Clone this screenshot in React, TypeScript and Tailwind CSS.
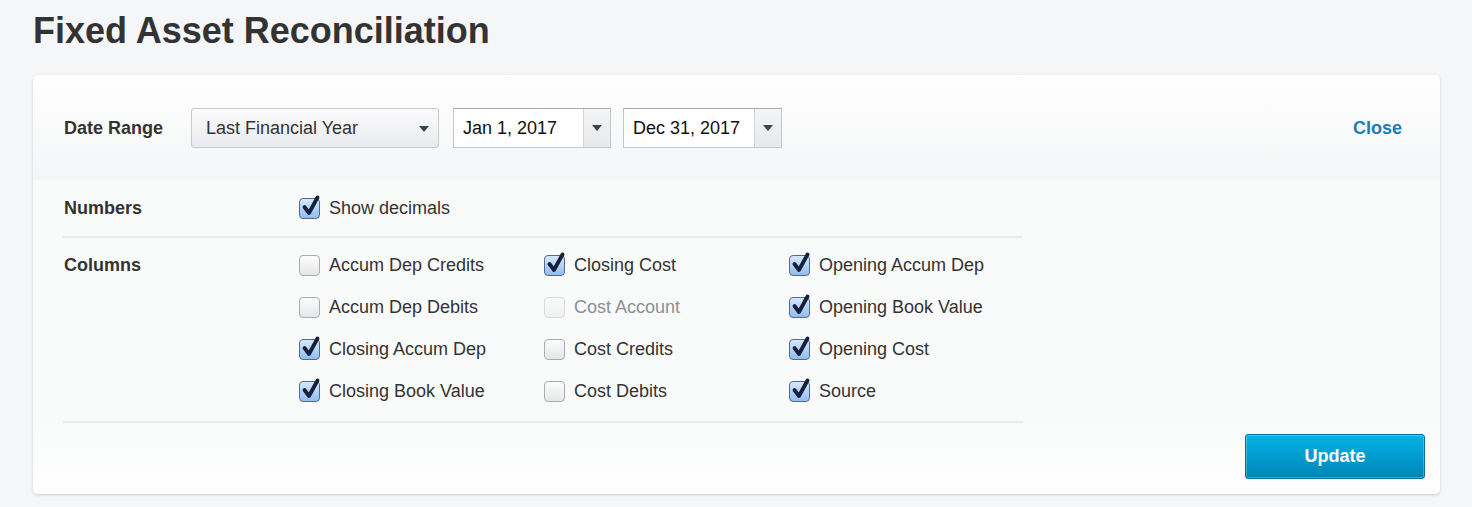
import React, { useState } from 'react';

const font = { fontFamily: '"Liberation Sans", Arial, sans-serif' };

function Arrow() {
  return (
    <svg width="10" height="6" viewBox="0 0 10 6" className="block">
      <path d="M0 0 L10 0 L5 6 Z" fill="#3d434c" />
    </svg>
  );
}

function Checkbox({ checked, disabled }: { checked: boolean; disabled?: boolean }) {
  return (
    <span className="relative inline-block w-[21px] h-[21px] shrink-0">
      <span
        className={
          'absolute inset-0 rounded-[4px] border ' +
          (checked
            ? 'border-[#56698a] bg-gradient-to-b from-[#d6e8ff] to-[#8fbdf0]'
            : disabled
            ? 'border-[#d8dadd] bg-gradient-to-b from-[#fbfbfb] to-[#eeeff0]'
            : 'border-[#a9adb2] bg-gradient-to-b from-[#fdfdfd] to-[#e4e6e8]')
        }
      />
      {checked && (
        <svg width="22" height="24" viewBox="0 0 22 24" className="absolute left-[1px] top-[-4px]">
          <path d="M4.5 13 L9 19 L17.5 3.5" fill="none" stroke="#17203a" strokeWidth="3.8" strokeLinecap="round" strokeLinejoin="round" />
        </svg>
      )}
    </span>
  );
}

function Check({ label, checked, disabled }: { label: string; checked: boolean; disabled?: boolean }) {
  return (
    <label className="flex items-center gap-[9px] h-[42px]">
      <Checkbox checked={checked} disabled={disabled} />
      <span className={'text-[18px] ' + (disabled ? 'text-[#8c8f93]' : 'text-[#333]')}>{label}</span>
    </label>
  );
}

function DateInput({ value, width }: { value: string; width: string }) {
  return (
    <div className={'flex h-[40px] border border-[#c3c6ca] border-t-[#a8abb0] bg-white ' + width}>
      <div className="flex-1 flex items-center px-[9px] pt-[2px] text-[18px] text-[#111]">{value}</div>
      <div className="w-[27px] flex items-center justify-center border-l border-[#d3d6d9] bg-gradient-to-b from-[#f3f4f5] to-[#e7e9eb]">
        <Arrow />
      </div>
    </div>
  );
}

export default function App() {
  const [decimals] = useState(true);

  const columns = [
    [
      { label: 'Accum Dep Credits', checked: false },
      { label: 'Accum Dep Debits', checked: false },
      { label: 'Closing Accum Dep', checked: true },
      { label: 'Closing Book Value', checked: true },
    ],
    [
      { label: 'Closing Cost', checked: true },
      { label: 'Cost Account', checked: false, disabled: true },
      { label: 'Cost Credits', checked: false },
      { label: 'Cost Debits', checked: false },
    ],
    [
      { label: 'Opening Accum Dep', checked: true },
      { label: 'Opening Book Value', checked: true },
      { label: 'Opening Cost', checked: true },
      { label: 'Source', checked: true },
    ],
  ];

  return (
    <div className="min-h-screen bg-[#f5f6f7] px-[33px] pt-[9px] pb-[14px]" style={font}>
      <h1 className="text-[36px] font-bold text-[#333] leading-[44px] mb-[22px]">Fixed Asset Reconciliation</h1>

      <div className="w-[1407px] bg-[#f9fafa] rounded-[5px] shadow-[0_1px_3px_rgba(0,0,0,0.18)] overflow-hidden">
        {/* Date range */}
        <div className="h-[105px] flex items-center pl-[31px] pr-[38px] bg-gradient-to-b from-white to-[#f4f5f6]">
          <div className="w-[127px] shrink-0 pt-[2px] text-[18px] font-bold text-[#333]">Date Range</div>
          <div className="w-[248px] h-[40px] flex items-center justify-between pl-[14px] pr-[9px] pt-[2px] rounded-[3px] border border-[#c6c9cd] bg-gradient-to-b from-[#fbfbfc] to-[#e8ebee] text-[18px] text-[#333]">
            <span>Last Financial Year</span>
            <Arrow />
          </div>
          <div className="w-[14px]" />
          <DateInput value="Jan 1, 2017" width="w-[158px]" />
          <div className="w-[12px]" />
          <DateInput value="Dec 31, 2017" width="w-[159px]" />
          <div className="flex-1" />
          <a className="pt-[2px] text-[18px] font-bold text-[#1a7db4]">Close</a>
        </div>

        {/* Options */}
        <div className="pl-[30px] w-[990px]">
          <div className="flex items-center h-[58px] border-b-2 border-[#ebecee] pl-[1px]">
            <div className="w-[235px] shrink-0 text-[18px] font-bold text-[#333]">Numbers</div>
            <Check label="Show decimals" checked={decimals} />
          </div>
          <div className="flex pt-[6px] pb-[9px] border-b-2 border-[#ebecee] pl-[1px]">
            <div className="w-[235px] shrink-0 h-[42px] flex items-center text-[18px] font-bold text-[#333]">Columns</div>
            <div className="grid grid-cols-[245px_245px_220px]">
              {columns.map((col, i) => (
                <div key={i} className="flex flex-col">
                  {col.map((c) => (
                    <Check key={c.label} label={c.label} checked={c.checked} disabled={c.disabled} />
                  ))}
                </div>
              ))}
            </div>
          </div>
        </div>

        <div className="flex justify-end pr-[15px] pt-[11px] pb-[15px] bg-gradient-to-b from-[#f9fafa] to-white">
          <button className="w-[180px] h-[45px] rounded-[3px] border border-[#0a6f9e] bg-gradient-to-b from-[#05b3e6] to-[#0085b8] shadow-[inset_0_0_0_1px_rgba(255,255,255,0.25)] text-white text-[18px] font-bold">
            Update
          </button>
        </div>
      </div>
    </div>
  );
}
